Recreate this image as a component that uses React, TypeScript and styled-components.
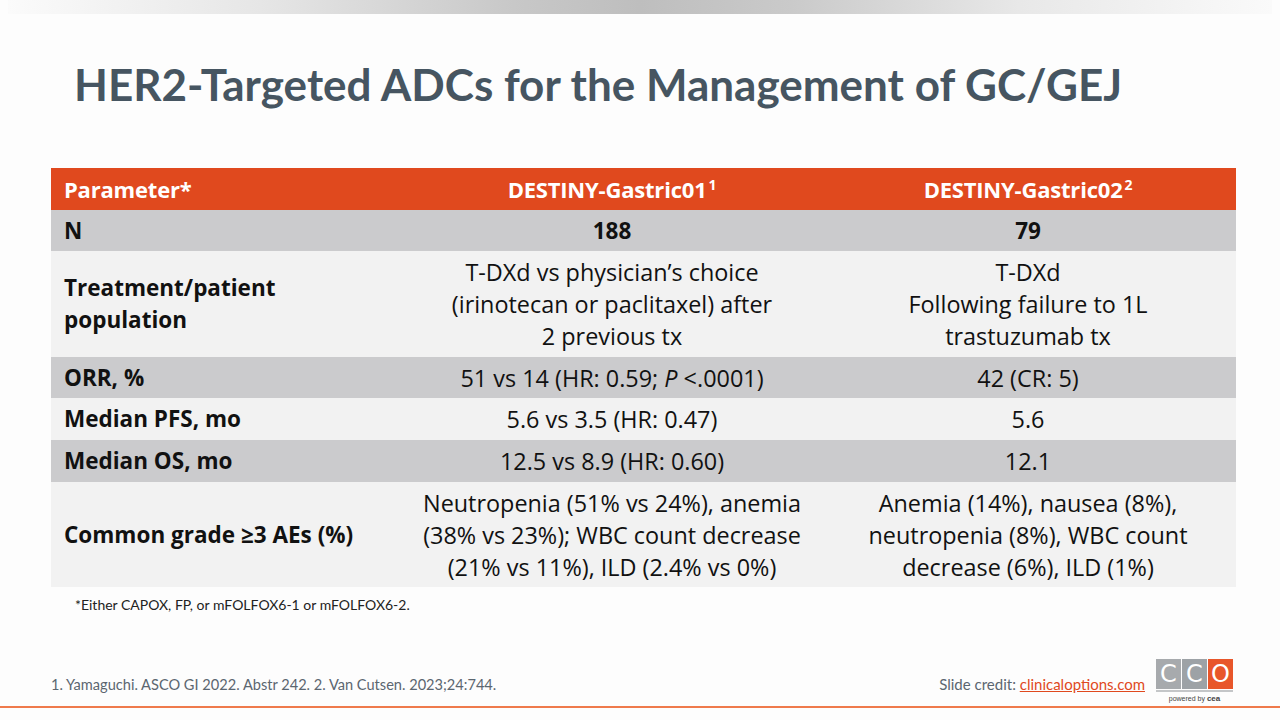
import React from 'react';
import styled, { createGlobalStyle } from 'styled-components';

const GlobalStyle = createGlobalStyle`
  html, body {
    margin: 0;
    padding: 0;
    background: #fdfdfd;
  }
  body {
    font-family: "Open Sans", Lato, "Liberation Sans", sans-serif;
  }
`;

interface Row {
  label: React.ReactNode;
  a: React.ReactNode;
  b: React.ReactNode;
  tone: 'dark' | 'light';
  height: number;
  strong?: boolean;
}

const rows: Row[] = [
  { label: 'N', a: '188', b: '79', tone: 'dark', height: 41, strong: true },
  {
    label: (
      <>
        Treatment/patient
        <br />
        population
      </>
    ),
    a: (
      <>
        T-DXd vs physician’s choice
        <br />
        (irinotecan or paclitaxel) after
        <br />2 previous tx
      </>
    ),
    b: (
      <>
        T-DXd
        <br />
        Following failure to 1L
        <br />
        trastuzumab tx
      </>
    ),
    tone: 'light',
    height: 106,
  },
  {
    label: 'ORR, %',
    a: (
      <>
        {'51 vs 14 (HR: 0.59; '}
        <i>P</i>
        {' <.0001)'}
      </>
    ),
    b: '42 (CR: 5)',
    tone: 'dark',
    height: 41,
  },
  { label: 'Median PFS, mo', a: '5.6 vs 3.5 (HR: 0.47)', b: '5.6', tone: 'light', height: 42 },
  { label: 'Median OS, mo', a: '12.5 vs 8.9 (HR: 0.60)', b: '12.1', tone: 'dark', height: 42 },
  {
    label: 'Common grade ≥3 AEs (%)',
    a: (
      <>
        Neutropenia (51% vs 24%), anemia
        <br />
        (38% vs 23%); WBC count decrease
        <br />
        (21% vs 11%), ILD (2.4% vs 0%)
      </>
    ),
    b: (
      <>
        Anemia (14%), nausea (8%),
        <br />
        neutropenia (8%), WBC count
        <br />
        decrease (6%), ILD (1%)
      </>
    ),
    tone: 'light',
    height: 105,
  },
];

const App: React.FC = () => {
  return (
    <Slide>
      <GlobalStyle />
      <TopBar />
      <Title>HER2-Targeted ADCs for the Management of GC/GEJ</Title>
      <Table>
        <HeadCell>Parameter*</HeadCell>
        <HeadCell center>
          <span>
            DESTINY-Gastric01<sup>1</sup>
          </span>
        </HeadCell>
        <HeadCell center>
          <span>
            DESTINY-Gastric02<sup>2</sup>
          </span>
        </HeadCell>
        {rows.map((r, i) => (
          <React.Fragment key={i}>
            <LabelCell tone={r.tone} h={r.height}>
              <CellText>{r.label}</CellText>
            </LabelCell>
            <ValueCell tone={r.tone} h={r.height} strong={r.strong}>
              <CellText>{r.a}</CellText>
            </ValueCell>
            <ValueCell tone={r.tone} h={r.height} strong={r.strong}>
              <CellText>{r.b}</CellText>
            </ValueCell>
          </React.Fragment>
        ))}
      </Table>
      <Footnote>*Either CAPOX, FP, or mFOLFOX6-1 or mFOLFOX6-2.</Footnote>
      <Footer>
        <Refs>1. Yamaguchi. ASCO GI 2022. Abstr 242. 2. Van Cutsen. 2023;24:744.</Refs>
        <Credit>
          Slide credit: <CreditLink>clinicaloptions.com</CreditLink>
        </Credit>
        <Logo>
          <LogoBoxes>
            <LogoBox color="#a7aaad">C</LogoBox>
            <LogoBox color="#9da2a6">C</LogoBox>
            <LogoBox color="#e8562a">O</LogoBox>
          </LogoBoxes>
          <LogoRule />
          <Powered>
            powered by <b>cea</b>
          </Powered>
        </Logo>
      </Footer>
      <BottomLine />
    </Slide>
  );
};

const Slide = styled.div`
  width: 1280px;
  height: 720px;
  background: #fdfdfd;
  position: relative;
  overflow: hidden;
  display: flex;
  flex-direction: column;
`;

const TopBar = styled.div`
  height: 14px;
  margin: 0 8px;
  background: linear-gradient(
    to right,
    #fbfbfb 0%,
    #e6e6e6 20%,
    #c8c8c8 40%,
    #bebebe 50%,
    #cacaca 62%,
    #e8e8e8 80%,
    #fafafa 100%
  );
`;

const Title = styled.h1`
  margin: 43px 0 0 74px;
  font-family: Lato, "Open Sans", sans-serif;
  font-weight: 700;
  font-size: 44px;
  line-height: 55px;
  color: #465561;
  white-space: nowrap;
`;

const Table = styled.div`
  margin: 56px 0 0 51px;
  width: 1185px;
  display: grid;
  grid-template-columns: 353px 416px 416px;
`;

const HeadCell = styled.div<{ center?: boolean }>`
  height: 42px;
  background: #e0491e;
  color: #ffffff;
  font-weight: 700;
  font-size: 22px;
  letter-spacing: -0.2px;
  display: flex;
  align-items: center;
  justify-content: ${p => (p.center ? 'center' : 'flex-start')};
  padding-left: ${p => (p.center ? '0' : '13px')};

  sup {
    font-size: 14px;
    line-height: 0;
    vertical-align: 8px;
    margin-left: 2px;
  }
`;

const Cell = styled.div<{ tone: 'dark' | 'light'; h: number }>`
  height: ${p => p.h}px;
  background: ${p => (p.tone === 'dark' ? '#cbcbcd' : '#f2f2f2')};
  color: #111111;
  line-height: 32px;
  display: flex;
  align-items: center;
`;

const CellText = styled.div``;

const LabelCell = styled(Cell)`
  padding-left: 13px;
  font-weight: 700;
  font-size: 22.5px;
`;

const ValueCell = styled(Cell)<{ strong?: boolean }>`
  justify-content: center;
  text-align: center;
  font-size: ${p => (p.strong ? '22.5px' : '23.4px')};
  font-weight: ${p => (p.strong ? 700 : 400)};
`;

const Footnote = styled.div`
  margin: 9px 0 0 75px;
  font-size: 14px;
  color: #222;
  font-family: Lato, "Open Sans", sans-serif;
`;

const Footer = styled.div`
  margin: 46px 47px 0 51px;
  display: flex;
  align-items: flex-start;
  font-family: Lato, "Open Sans", sans-serif;
`;

const Refs = styled.div`
  flex: 1;
  margin-top: 17px;
  font-size: 14.6px;
  color: #5b6670;
`;

const Credit = styled.div`
  margin-top: 16px;
  font-size: 15px;
  color: #5b6670;
`;

const CreditLink = styled.span`
  color: #e0491e;
  text-decoration: underline;
`;

const Logo = styled.div`
  margin-left: 11px;
  width: 77px;
  display: flex;
  flex-direction: column;
  align-items: center;
`;

const LogoBoxes = styled.div`
  display: flex;
  width: 77px;
  gap: 1px;
`;

const LogoBox = styled.div<{ color: string }>`
  flex: 1;
  height: 30px;
  background: ${p => p.color};
  color: #ffffff;
  font-family: "DejaVu Sans", sans-serif;
  font-size: 24px;
  display: flex;
  align-items: center;
  justify-content: center;
  line-height: 1;
`;

const LogoRule = styled.div`
  width: 77px;
  height: 2px;
  margin-top: 1px;
  background: #c4c6c8;
`;

const Powered = styled.div`
  margin-top: 2px;
  font-size: 7px;
  color: #444;
  font-family: "Liberation Sans", sans-serif;

  b {
    font-size: 8px;
  }
`;

const BottomLine = styled.div`
  position: absolute;
  left: 0;
  right: 0;
  top: 706px;
  height: 2px;
  background: #ef7a4c;
`;

export default App;
